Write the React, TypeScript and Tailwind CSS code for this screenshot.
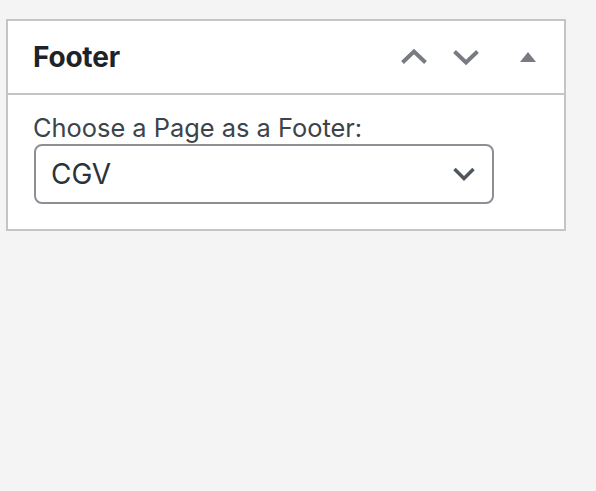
import React from "react";

export default function App() {
  return (
    <div
      className="w-[596px] h-[491px] bg-[#f4f4f4] pl-[6px] pt-[19px]"
      style={{ fontFamily: 'Inter, "Noto Sans", sans-serif' }}
    >
      <div className="w-[560px] border-2 border-[#c3c4c7] bg-white">
        <div className="h-[74px] border-b-2 border-[#c3c4c7] flex items-center justify-between pl-[25px]">
          <h2 className="text-[28px] font-bold text-[#1d2327] leading-none tracking-[-0.2px]">
            Footer
          </h2>
          <div className="flex items-center h-full">
            <div className="w-[52px] h-full flex items-center justify-center">
              <svg width="30" height="20" viewBox="0 0 30 20">
                <path d="M3.5 15.5 L15 4.5 L26.5 15.5" fill="none" stroke="#787c82" strokeWidth="4" />
              </svg>
            </div>
            <div className="w-[52px] h-full flex items-center justify-center">
              <svg width="30" height="20" viewBox="0 0 30 20">
                <path d="M3.5 4.5 L15 15.5 L26.5 4.5" fill="none" stroke="#787c82" strokeWidth="4" />
              </svg>
            </div>
            <div className="w-[72px] h-full flex items-center justify-center">
              <svg width="18" height="12" viewBox="0 0 18 12">
                <path d="M1 11 L9 1 L17 11 Z" fill="#787c82" />
              </svg>
            </div>
          </div>
        </div>
        <div className="pl-[25px] pt-[17px] pb-[25px]">
          <label className="block text-[25.4px] leading-[32px] text-[#3c434a]">
            Choose a Page as a Footer:
          </label>
          <div className="ml-px w-[460px] h-[60px] border-2 border-[#8c8f94] rounded-[8px] flex items-center justify-between pl-[15px] pr-[16px]">
            <span className="text-[28px] text-[#2c3338] leading-none">CGV</span>
            <svg width="24" height="16" viewBox="0 0 24 16">
              <path d="M2.5 3 L12 12.5 L21.5 3" fill="none" stroke="#50575e" strokeWidth="3.5" />
            </svg>
          </div>
        </div>
      </div>
    </div>
  );
}
